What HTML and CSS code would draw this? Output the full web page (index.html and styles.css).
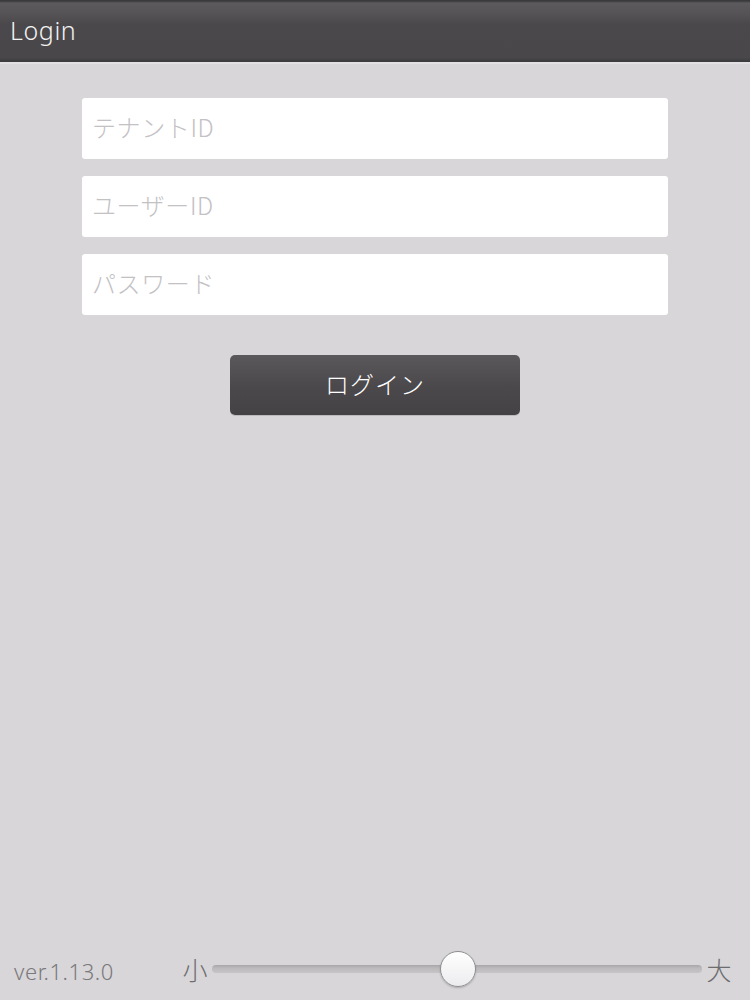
FILE: index.html
```html
<!DOCTYPE html>
<html lang="ja">
<head>
<meta charset="utf-8">
<title>Login</title>
<link rel="stylesheet" href="styles.css">
</head>
<body>
<div class="app">
  <header class="topbar"><span class="title">Login</span></header>
  <main class="content">
    <form class="form">
      <input class="field" type="text" placeholder="テナントID">
      <input class="field" type="text" placeholder="ユーザーID">
      <input class="field" type="password" placeholder="パスワード">
      <button class="btn" type="button">ログイン</button>
    </form>
  </main>
  <footer class="footer">
    <span class="ver">ver.1.13.0</span>
    <div class="sizer">
      <span class="lbl">小</span>
      <div class="track">
        <div class="thumb"></div>
      </div>
      <span class="lbl">大</span>
    </div>
  </footer>
</div>
</body>
</html>
```
FILE: styles.css
```css
* { box-sizing: border-box; }
html, body { margin: 0; padding: 0; }
body {
  background: #d8d6d9;
  font-family: "Noto Sans CJK JP", "Noto Sans", sans-serif;
}
.app {
  width: 750px;
  height: 1000px;
  display: flex;
  flex-direction: column;
}
.topbar {
  height: 64px;
  flex: none;
  background: linear-gradient(#3a393c 0, #3a393c 1px, #5c5a5d 3px, #555356 14px, #4a484b 24px, #49474a 58px, #3c3b3e 61px);
  border-bottom: 2px solid #e2e0e3;
  display: flex;
  align-items: center;
  padding: 0 10px 2px;
}
.title {
  color: #f2f2f2;
  font-size: 25px;
  font-family: "Noto Sans", sans-serif;
  font-weight: 300;
  letter-spacing: 0.6px;
}
.content {
  flex: 1;
}
.form {
  display: flex;
  flex-direction: column;
  align-items: center;
  padding-top: 34px;
  gap: 17px;
}
.field {
  width: 586px;
  height: 61px;
  border: none;
  border-radius: 3px;
  background: #ffffff;
  padding: 0 10px 4px;
  font-size: 24px;
  font-family: "Noto Sans CJK JP", sans-serif;
  font-weight: 300;
  letter-spacing: 0.6px;
  color: #333;
  outline: none;
}
.field::placeholder { color: #c3c1c4; }
.btn {
  margin-top: 23px;
  width: 290px;
  height: 60px;
  border: none;
  border-radius: 5px;
  background: linear-gradient(#5a585b, #4b494c 50%, #444245);
  box-shadow: 0 1px 0 #bcbabd;
  color: #ffffff;
  font-size: 24px;
  font-family: "Noto Sans CJK JP", sans-serif;
  font-weight: 300;
  letter-spacing: 1px;
  padding: 0 0 3px;
}
.footer {
  height: 62px;
  flex: none;
  display: flex;
  align-items: center;
  padding: 0 14px 0 14px;
}
.ver {
  color: #7a797b;
  font-size: 22px;
  font-family: "Noto Sans", sans-serif;
  font-weight: 300;
  letter-spacing: 0.6px;
  width: 164px;
  margin-top: 4px;
}
.sizer {
  flex: 1;
  display: flex;
  align-items: center;
  margin-top: 0;
}
.lbl {
  color: #6d6c6e;
  font-size: 25px;
  font-family: "Noto Sans CJK JP", sans-serif;
  font-weight: 300;
  width: 34px;
  text-align: center;
}
.track {
  position: relative;
  flex: 1;
  height: 8px;
  border-radius: 4px;
  background: linear-gradient(#a8a6a9, #bcbabd 40%, #c6c4c7);
}
.thumb {
  position: absolute;
  top: 50%;
  left: 228px;
  width: 36px;
  height: 36px;
  margin-top: -18px;
  border-radius: 50%;
  background: linear-gradient(#ffffff, #ecebee);
  border: 1px solid #8f8e91;
  box-shadow: 0 1px 2px rgba(0,0,0,0.2);
}
```
